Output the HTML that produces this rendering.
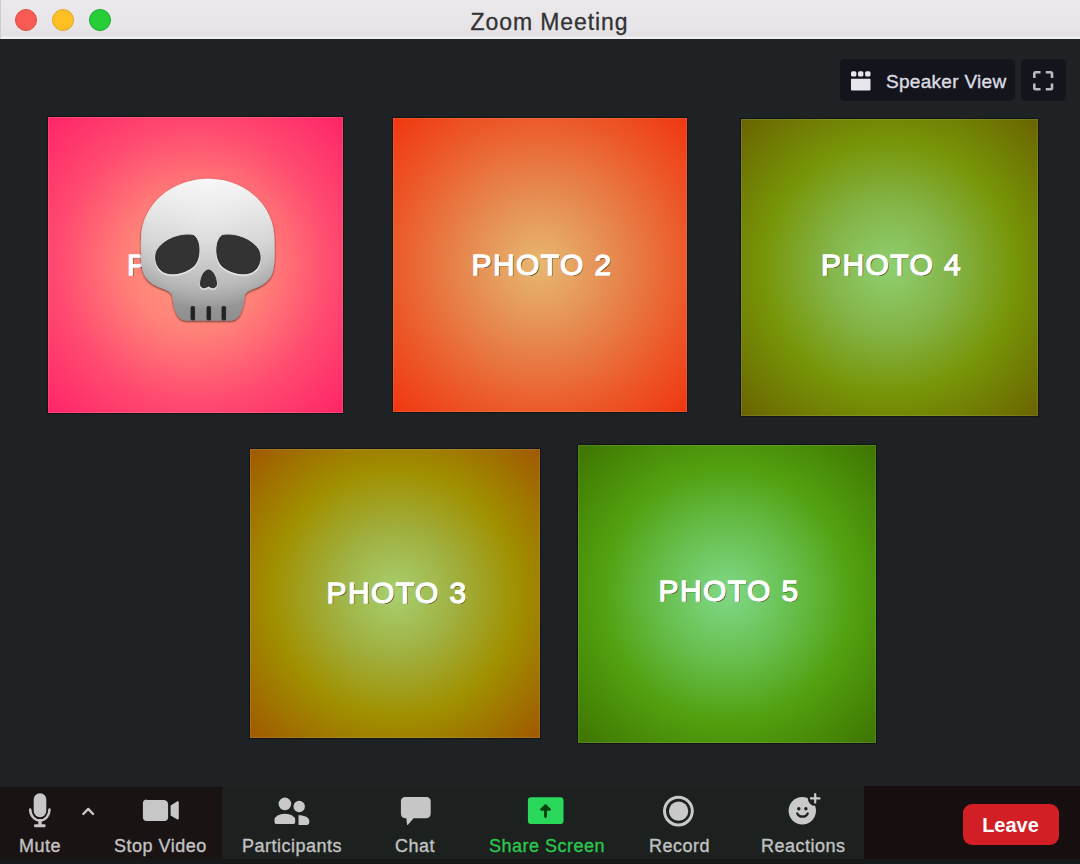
<!DOCTYPE html>
<html><head><meta charset="utf-8">
<style>
*{margin:0;padding:0;box-sizing:border-box}
html,body{width:1080px;height:864px;overflow:hidden;background:#1e2224;font-family:"Liberation Sans",sans-serif}
.abs{position:absolute}
svg{position:absolute;overflow:visible}
#titlebar{left:0;top:0;width:1080px;height:39px;background:linear-gradient(#ebe9eb 0,#e6e4e6 30px,#e2e0e2 36px,#efeef0 37px,#eeedef 39px)}
.tl{position:absolute;top:9px;width:22px;height:22px;border-radius:50%}
#title{left:9px;width:1080px;top:9px;text-align:center;font-size:23px;color:#333235;letter-spacing:0.9px;padding-left:1px;-webkit-text-stroke:0.3px #333235}
.photo{position:absolute;overflow:hidden;box-shadow:inset 0 0 0 1px rgba(255,255,255,.1),0 0 1px 1px rgba(0,0,0,.35)}
.ph{position:absolute;left:0;right:0;text-align:center;color:#fff;font-weight:normal;-webkit-text-stroke:1.3px #fff;font-size:30px;letter-spacing:1.4px;padding-left:4px;text-shadow:1.2px 0.6px 0 rgba(45,30,15,.8)}
.btn{position:absolute;background:#13141c;border-radius:5px}
.lbl{position:absolute;font-size:18px;color:#c2c2c2;white-space:nowrap;letter-spacing:0.5px;-webkit-text-stroke:0.35px #c2c2c2}
</style></head><body>
<div id="titlebar" class="abs">
  <div class="abs" style="left:0;top:0;width:1px;height:39px;background:#cdccd0"></div>
  <div class="tl" style="left:15px;background:#f95a53;border:1px solid #dc4a44"></div>
  <div class="tl" style="left:52px;background:#fdc023;border:1px solid #e0a42a"></div>
  <div class="tl" style="left:89px;background:#26cf38;border:1px solid #1aa92c"></div>
  <div id="title" class="abs">Zoom Meeting</div>
</div>

<!-- speaker view -->
<div class="btn" style="left:840px;top:59px;width:175px;height:42px"></div>
<div class="btn" style="left:1021px;top:59px;width:45px;height:42px"></div>
<svg style="left:0;top:0" width="1080" height="120">
  <g fill="#e6e6ec">
    <rect x="851" y="71.3" width="5.4" height="5.3" rx="1.5"/>
    <rect x="858" y="71.3" width="5.4" height="5.3" rx="1.5"/>
    <rect x="865.1" y="71.3" width="5.4" height="5.3" rx="1.5"/>
    <rect x="851" y="78.7" width="19.5" height="11.8" rx="0.8"/>
  </g>
  <g fill="none" stroke="#b9b9c4" stroke-width="2.6" stroke-linecap="butt">
    <path d="M1034.3 78 V73.5 Q1034.3 72.3 1035.5 72.3 H1040.5"/>
    <path d="M1045.8 72.3 H1050.8 Q1052 72.3 1052 73.5 V78"/>
    <path d="M1034.3 83.5 V88 Q1034.3 89.2 1035.5 89.2 H1040.5"/>
    <path d="M1045.8 89.2 H1050.8 Q1052 89.2 1052 88 V83.5"/>
  </g>
</svg>
<div class="abs" style="left:886px;top:71px;font-size:19px;color:#dcdce2;letter-spacing:0.3px;white-space:nowrap;-webkit-text-stroke:0.4px #dcdce2">Speaker View</div>

<!-- photos -->
<div class="photo" style="left:48px;top:117px;width:295px;height:296px;background:radial-gradient(circle at 50% 50%,#ff9e7e 0%,#ff8078 33%,#ff4a70 66%,#ff2468 100%)">
  <div class="ph" style="top:131px">PHOTO 1</div>
</div>
<div class="photo" style="left:393px;top:118px;width:294px;height:294px;background:radial-gradient(circle at 50% 50%,#e7b870 0%,#e68a50 35%,#ec5a2a 70%,#f0360f 100%)">
  <div class="ph" style="top:130px">PHOTO 2</div>
</div>
<div class="photo" style="left:741px;top:119px;width:297px;height:297px;background:radial-gradient(circle at 50% 50%,#8fd070 0%,#84b448 30%,#779508 60%,#6a6300 100%)">
  <div class="ph" style="top:129px">PHOTO 4</div>
</div>
<div class="photo" style="left:250px;top:449px;width:290px;height:289px;background:radial-gradient(circle at 50% 50%,#a8d070 0%,#a0b040 30%,#a09000 60%,#a05800 100%)">
  <div class="ph" style="top:127px">PHOTO 3</div>
</div>
<div class="photo" style="left:578px;top:445px;width:298px;height:298px;background:radial-gradient(circle at 50% 50%,#80d888 0%,#68c050 30%,#52a010 60%,#3e7400 100%)">
  <div class="ph" style="top:129px">PHOTO 5</div>
</div>

<!-- skull -->
<svg style="left:0;top:0" width="400" height="400">
  <defs>
    <linearGradient id="sk" x1="0" y1="0" x2="0" y2="1">
      <stop offset="0" stop-color="#f6f6f6"/>
      <stop offset="0.45" stop-color="#d6d6d6"/>
      <stop offset="1" stop-color="#a9a9a9"/>
    </linearGradient>
    <radialGradient id="skr" cx="208" cy="215" r="95" gradientUnits="userSpaceOnUse">
      <stop offset="0" stop-color="#fff" stop-opacity="0.25"/>
      <stop offset="0.55" stop-color="#fff" stop-opacity="0"/>
      <stop offset="0.85" stop-color="#000" stop-opacity="0.06"/>
      <stop offset="1" stop-color="#000" stop-opacity="0.16"/>
    </radialGradient>
    <filter id="sh" x="-20%" y="-20%" width="140%" height="140%">
      <feGaussianBlur in="SourceAlpha" stdDeviation="1.1"/>
      <feOffset dx="0.3" dy="1.2"/>
      <feComponentTransfer><feFuncA type="linear" slope="0.7"/></feComponentTransfer>
      <feMerge><feMergeNode/><feMergeNode in="SourceGraphic"/></feMerge>
    </filter>
  </defs>
  <g filter="url(#sh)">
    <path fill="url(#sk)" d="M208.5 178.8 C171 178.8 141 205 141 240 C140.8 255 141.2 265 142.8 271 C145 280 153.5 286 163 288.8 C169 291 172 293 172.5 297 C173 303 174 308 176 312 C178 318 182 320.5 187 320.5 L230 320.5 C235 320.5 239 318 241 312 C243 308 244 303 244.5 297 C245 293 248 291 254 288.8 C263 286 271 280 273 271 C274.5 265 275 255 274.5 240 C274.5 205 245 178.8 208.5 178.8 Z"/>
  </g>
  <path fill="url(#skr)" d="M208.5 178.8 C171 178.8 141 205 141 240 C140.8 255 141.2 265 142.8 271 C145 280 153.5 286 163 288.8 C169 291 172 293 172.5 297 C173 303 174 308 176 312 C178 318 182 320.5 187 320.5 L230 320.5 C235 320.5 239 318 241 312 C243 308 244 303 244.5 297 C245 293 248 291 254 288.8 C263 286 271 280 273 271 C274.5 265 275 255 274.5 240 C274.5 205 245 178.8 208.5 178.8 Z"/>
  <g fill="none" stroke="#fff" stroke-opacity="0.5" stroke-width="2" transform="translate(0,1.3)">
    <path d="M193.8 235.5 C181.8 233 163.8 239 157.3 250 C153.8 257 155.8 268 163.8 272 C171.8 276 185.8 273 193.8 266 C200.8 259 200.8 241 193.8 235.5 Z"/>
    <path d="M222 235.5 C234 233 252 239 258.5 250 C262 257 260 268 252 272 C244 276 230 273 222 266 C215 259 215 241 222 235.5 Z"/>
    <path d="M208.5 270 C204 270 200.5 278 200.5 284 C200.5 288 204 289 208.5 286 C213 289 216.5 288 216.5 284 C216.5 278 213 270 208.5 270 Z"/>
  </g>
  <g fill="#333" stroke="#262626" stroke-width="0.9">
    <path d="M193.8 235.5 C181.8 233 163.8 239 157.3 250 C153.8 257 155.8 268 163.8 272 C171.8 276 185.8 273 193.8 266 C200.8 259 200.8 241 193.8 235.5 Z"/>
    <path d="M222 235.5 C234 233 252 239 258.5 250 C262 257 260 268 252 272 C244 276 230 273 222 266 C215 259 215 241 222 235.5 Z"/>
    <path d="M208.5 270 C204 270 200.5 278 200.5 284 C200.5 288 204 289 208.5 286 C213 289 216.5 288 216.5 284 C216.5 278 213 270 208.5 270 Z"/>
    <rect x="191" y="306.5" width="3.6" height="13.5" rx="1" fill="#222"/>
    <rect x="207" y="306.5" width="3.6" height="13.5" rx="1" fill="#222"/>
    <rect x="222" y="306.5" width="3.6" height="13.5" rx="1" fill="#222"/>
  </g>
</svg>

<!-- toolbar -->
<div class="abs" style="left:0;top:786px;width:1080px;height:78px;background:#1c201f"></div>
<div class="abs" style="left:0;top:787px;width:222px;height:72px;background:#1a1314"></div>
<div class="abs" style="left:864px;top:786px;width:216px;height:73px;background:#170e0f"></div>
<div class="abs" style="left:0;top:859px;width:1080px;height:5px;background:#15191a"></div>

<svg style="left:0;top:780px" width="1080" height="60">
  <g transform="translate(0,-780)">
  <!-- mic -->
  <g fill="#c8c6c6">
    <rect x="33.7" y="793.2" width="12.6" height="24" rx="6.3"/>
    <rect x="38.3" y="819" width="3.4" height="6"/>
    <rect x="34" y="824.3" width="11.5" height="3" rx="1"/>
  </g>
  <path d="M30.2 809.5 C30.2 815.5 34.5 820.5 40 820.5 C45.5 820.5 49.5 815.5 49.5 809.5" fill="none" stroke="#c8c6c6" stroke-width="2.5" stroke-linecap="round"/>
  <path d="M83.3 814 L88.2 808.9 L93.1 814" fill="none" stroke="#c8c6c6" stroke-width="2.4" stroke-linecap="round" stroke-linejoin="round"/>
  <!-- camera -->
  <g fill="#c7c7c7">
    <path d="M146.5 800 H163.5 C166.3 800 168.1 801.8 168.1 804.4 V817.4 C168.1 819.4 166.6 821 164.6 821 H146.4 C144.4 821 142.9 819.4 142.9 817.4 V803.1 C142.9 801.1 144.5 799.5 146.5 799.5 Z"/>
    <path d="M170.6 805.6 L177 801.4 C177.8 800.9 178.8 801.5 178.8 802.5 V818.2 C178.8 819.2 177.8 819.8 177 819.2 L170.6 815.6 Z"/>
  </g>
  <!-- participants -->
  <g fill="#c9c9c9">
    <circle cx="284.9" cy="803.9" r="6.3"/>
    <circle cx="299.2" cy="806.5" r="5.7"/>
    <path d="M298.5 815.2 C305 815.2 309.3 817.6 309.3 821 V822.3 C309.3 823.9 308.3 824.9 306.8 824.9 H298.5 Z"/>
  </g>
  <path d="M273.7 820 C273.7 815.5 279 812.9 284.9 812.9 C290.8 812.9 296 815.5 296 820 V821.9 C296 823.6 294.8 824.9 293 824.9 H276.7 C274.9 824.9 273.7 823.6 273.7 821.9 Z" fill="#c9c9c9" stroke="#1c201f" stroke-width="1.6"/>
  <!-- chat -->
  <path fill="#c6c6c6" d="M405 796.9 H426.6 C428.9 796.9 430.7 798.7 430.7 801 V814.1 C430.7 816.4 428.9 818.2 426.6 818.2 H413.6 L408 824.7 C407.6 825.1 407 824.9 407 824.3 L406.3 818.2 H405 C402.7 818.2 400.9 816.4 400.9 814.1 V801 C400.9 798.7 402.7 796.9 405 796.9 Z"/>
  <!-- share -->
  <rect x="527.9" y="797.2" width="35.6" height="26.8" rx="3" fill="#2ad85c"/>
  <g stroke="#07430f" fill="#07430f" stroke-linecap="round" stroke-linejoin="round">
    <path d="M545.5 816.6 V808" stroke-width="2.9"/>
    <path d="M541.2 809.6 L545.5 805.2 L549.8 809.6 Z" stroke-width="2.2"/>
  </g>
  <!-- record -->
  <circle cx="678.4" cy="811.1" r="13.9" fill="none" stroke="#c9c9c9" stroke-width="3"/>
  <circle cx="678.6" cy="811.1" r="9.7" fill="#c9c9c9"/>
  <!-- reactions -->
  <defs>
    <mask id="rm">
      <rect x="760" y="780" width="80" height="60" fill="#fff"/>
      <circle cx="815.2" cy="798.4" r="7.4" fill="#000"/>
    </mask>
  </defs>
  <circle cx="802.3" cy="810.8" r="13.7" fill="#c9c9c9" mask="url(#rm)"/>
  <g fill="#1c201f">
    <circle cx="798.8" cy="808.8" r="1.7"/>
    <circle cx="805.9" cy="808.8" r="1.7"/>
  </g>
  <path d="M797.2 813.4 C799.5 817.8 805.5 817.8 807.8 813.4" fill="none" stroke="#1c201f" stroke-width="2.2" stroke-linecap="round"/>
  <g stroke="#c9c9c9" stroke-width="2.2" stroke-linecap="round">
    <path d="M815.2 794 V802.6"/>
    <path d="M810.9 798.4 H819.5"/>
  </g>
  </g>
</svg>

<div class="lbl" style="left:19px;top:835.6px">Mute</div>
<div class="lbl" style="left:114px;top:835.6px">Stop Video</div>
<div class="lbl" style="left:242px;top:835.6px">Participants</div>
<div class="lbl" style="left:395px;top:835.6px">Chat</div>
<div class="lbl" style="left:489px;top:835.6px;color:#2cc54e;-webkit-text-stroke:0.35px #2cc54e">Share Screen</div>
<div class="lbl" style="left:649px;top:835.6px">Record</div>
<div class="lbl" style="left:761px;top:835.6px">Reactions</div>

<div class="abs" style="left:962.5px;top:803.6px;width:96px;height:41px;background:#d21f26;border-radius:9px"></div>
<div class="abs" style="left:962px;top:813.5px;width:97px;text-align:center;color:#fff;font-weight:bold;font-size:20px">Leave</div>

</body></html>
